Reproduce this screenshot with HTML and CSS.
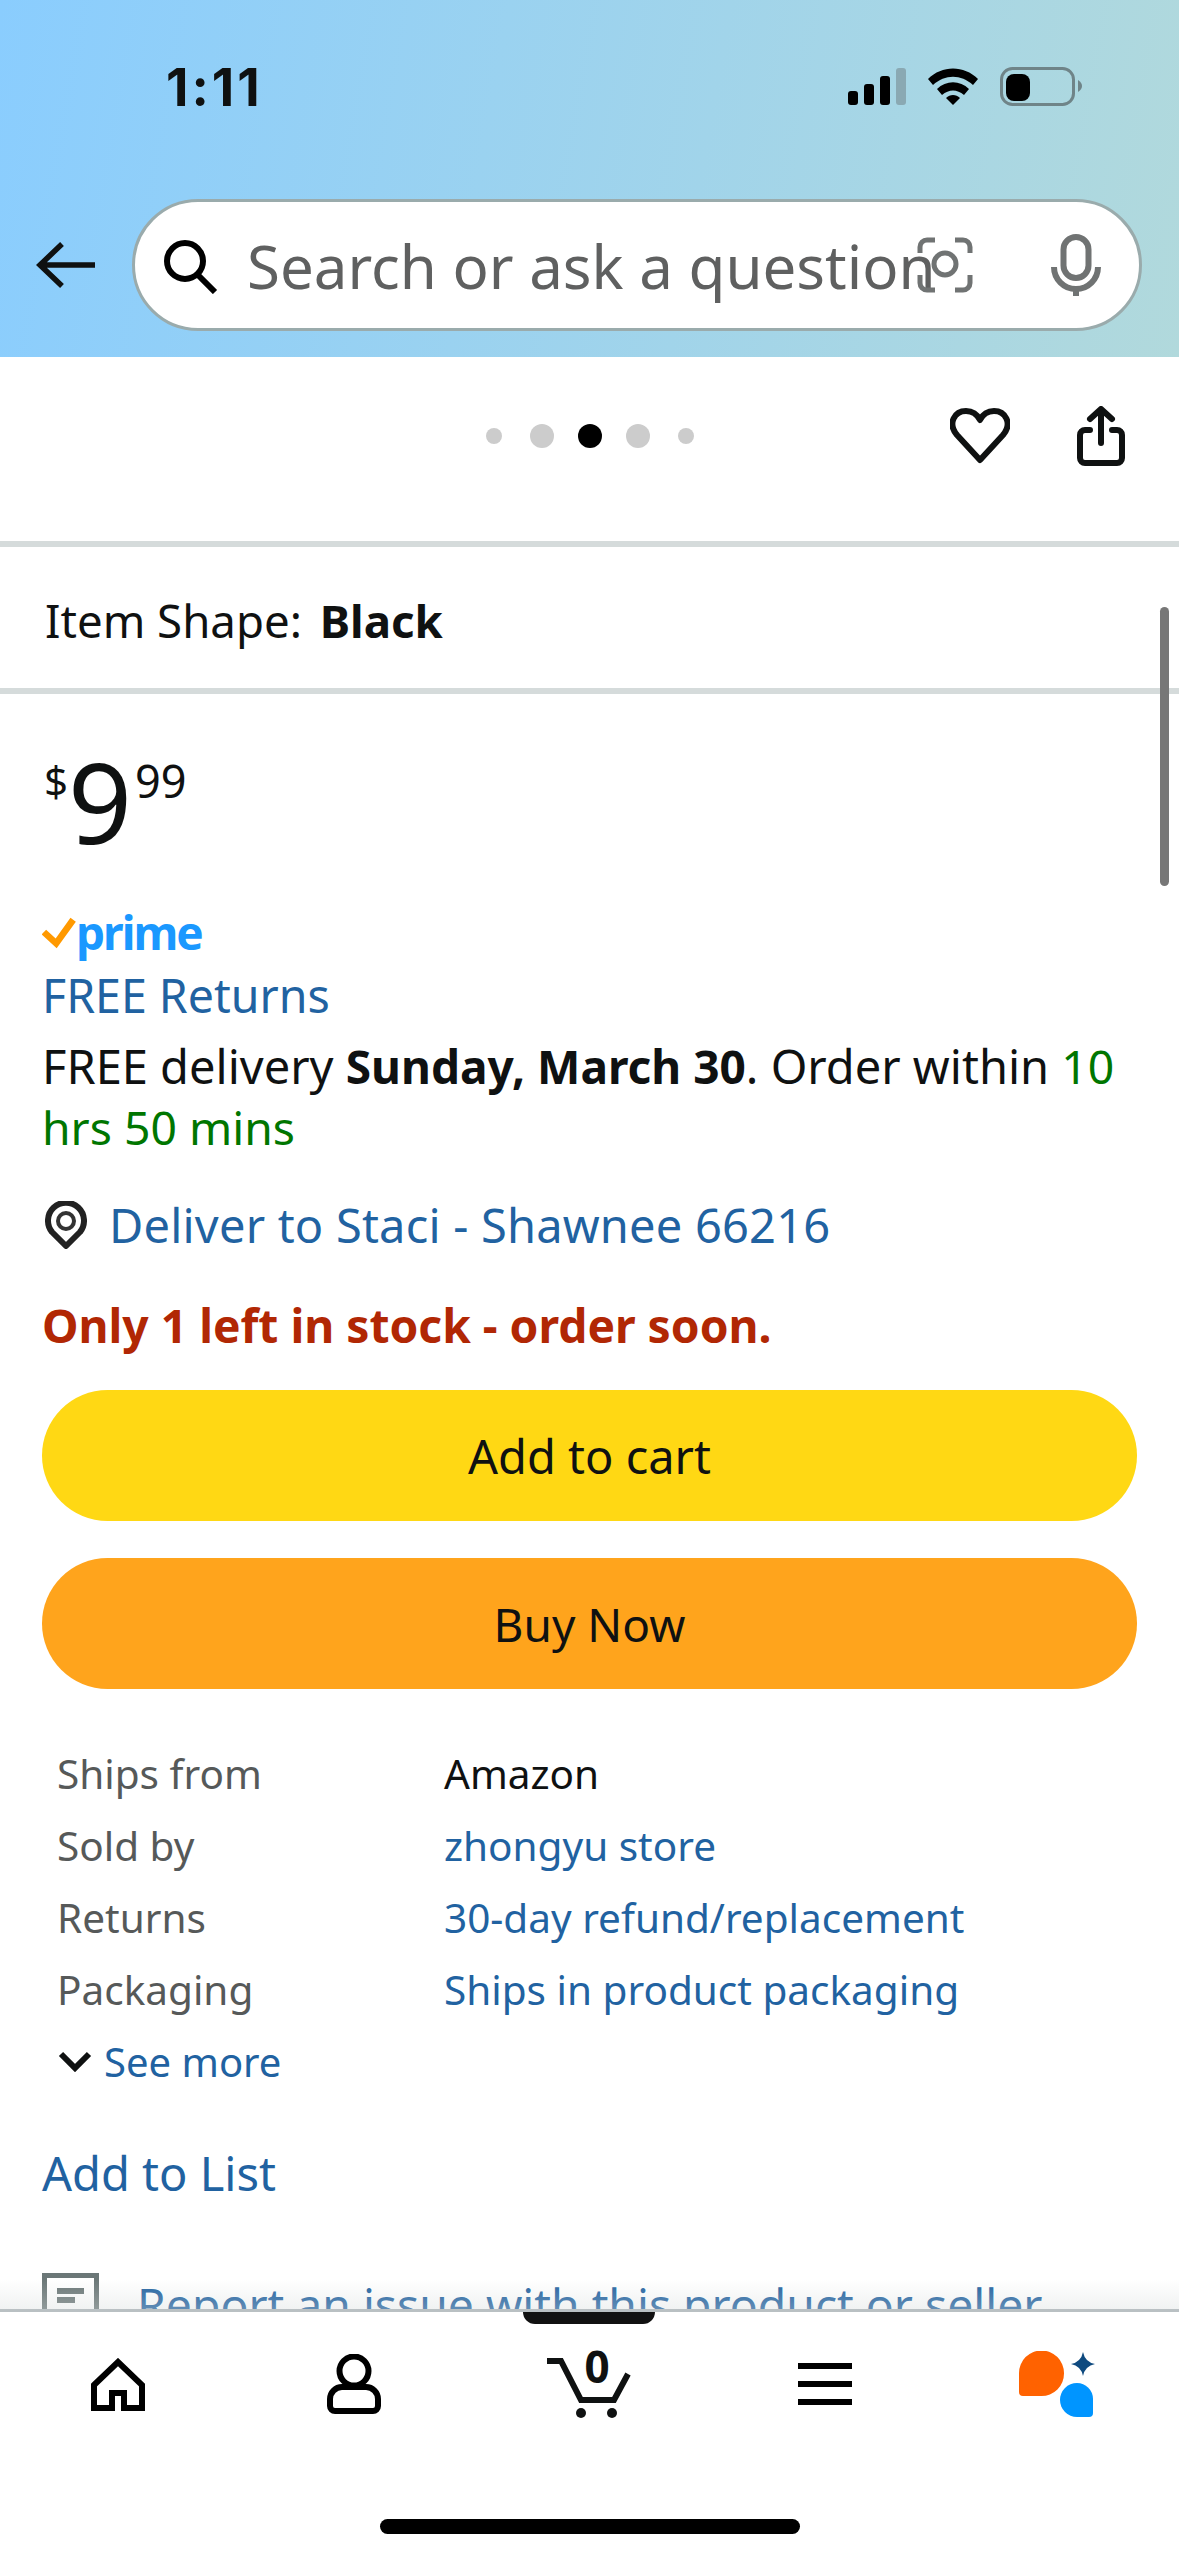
FILE: index.html
```html
<!DOCTYPE html>
<html lang="en">
<head>
  <meta charset="UTF-8">
  <meta name="viewport" content="width=device-width, initial-scale=1.0">
  <title>Product details</title>
  <link rel="stylesheet" href="styles.css">
</head>
<body>
  <header class="top">
    <div class="status">
      <span class="time">1:11</span>
      <div class="status-icons">
        <svg width="58" height="38" viewBox="0 0 58 38">
          <rect x="0" y="23" width="10" height="14" rx="3" fill="#000"/>
          <rect x="16" y="16" width="10" height="21" rx="3" fill="#000"/>
          <rect x="32" y="8" width="10" height="29" rx="3" fill="#000"/>
          <rect x="48" y="0" width="10" height="37" rx="3" fill="#8aa9b3"/>
        </svg>
        <svg width="50" height="38" viewBox="0 0 50 38">
          <path d="M0 11 C14 -3 36 -3 50 11 L45 17 C33 6 17 6 5 17 Z" fill="#000"/>
          <path d="M9 21 C18 12 32 12 41 21 L36 27 C29 21 21 21 14 27 Z" fill="#000"/>
          <path d="M18 30 C22 26 28 26 32 30 L25 37 Z" fill="#000"/>
        </svg>
        <svg width="82" height="40" viewBox="0 0 82 40">
          <rect x="1.5" y="1.5" width="72" height="36" rx="11" fill="none" stroke="#6f8488" stroke-width="3"/>
          <rect x="6" y="7" width="24" height="27" rx="8" fill="#000"/>
          <path d="M78 13 C81 15 82 17 82 19 C82 21 81 23 78 25 Z" fill="#6f8488"/>
        </svg>
      </div>
    </div>
    <div class="search-row">
      <svg class="back" width="59" height="48" viewBox="0 0 59 48">
        <path d="M59 24 H4 M26 3 L4 24 L26 45" fill="none" stroke="#0f1111" stroke-width="5.5"/>
      </svg>
      <div class="search">
        <svg class="search-icon" width="54" height="54" viewBox="0 0 54 54">
          <circle cx="21" cy="21" r="18" fill="none" stroke="#000" stroke-width="6"/>
          <path d="M33 34 L51 52" stroke="#000" stroke-width="6"/>
        </svg>
        <span class="search-text">Search or ask a question</span>
        <svg class="camera" width="56" height="56" viewBox="0 0 56 56">
          <path d="M3 16 V10 a7 7 0 0 1 7-7 H18 M38 3 H46 a7 7 0 0 1 7 7 V16 M53 38 V46 a7 7 0 0 1-7 7 H38 M18 53 H10 a7 7 0 0 1-7-7 V38" fill="none" stroke="#707373" stroke-width="5"/>
          <circle cx="28" cy="27" r="11" fill="none" stroke="#707373" stroke-width="5"/>
        </svg>
        <svg class="mic" width="50" height="62" viewBox="0 0 50 62">
          <rect x="12.5" y="3" width="25" height="41" rx="12.5" fill="none" stroke="#707373" stroke-width="6"/>
          <path d="M3 33 a22 22 0 0 0 44 0 M25 55 V62" fill="none" stroke="#707373" stroke-width="6"/>
        </svg>
      </div>
    </div>
  </header>

  <main class="page">
    <span class="scroll-thumb"></span>

    <div class="gallery-bar">
      <div></div>
      <div class="dots">
        <span class="dot small"></span>
        <span class="dot"></span>
        <span class="dot active"></span>
        <span class="dot"></span>
        <span class="dot small"></span>
      </div>
      <div class="gallery-actions">
        <svg width="60" height="56" viewBox="0 0 60 56">
          <path d="M30 52 L7 27 C-3 15 5 3 16 3 C22 3 27 6 30 12 C33 6 38 3 44 3 C55 3 63 15 53 27 Z" fill="none" stroke="#0f1111" stroke-width="6" stroke-linejoin="round"/>
        </svg>
        <svg width="48" height="60" viewBox="0 0 48 60">
          <path d="M13 24 H8 a5 5 0 0 0-5 5 V52 a5 5 0 0 0 5 5 H40 a5 5 0 0 0 5-5 V29 a5 5 0 0 0-5-5 H35" fill="none" stroke="#0f1111" stroke-width="6" stroke-linecap="round"/>
          <path d="M24 37 V4 M13 13 L24 3 L35 13" fill="none" stroke="#0f1111" stroke-width="6" stroke-linecap="round" stroke-linejoin="round"/>
        </svg>
      </div>
    </div>

    <div class="variant">Item Shape: <b>Black</b></div>

    <section class="buy-box">
      <div class="price">
        <span class="currency">$</span>
        <span class="whole">9</span>
        <span class="cents">99</span>
      </div>

      <div class="prime">
        <svg width="34" height="34" viewBox="0 0 36 34">
          <path d="M2 16 L15 28 L33 3" fill="none" stroke="#ff9900" stroke-width="7"/>
        </svg>
        <span class="prime-text">prime</span>
      </div>
      <a class="line link free-returns" href="#">FREE Returns</a>
      <p class="delivery">FREE delivery <b>Sunday, March 30</b>. Order within <span class="green">10 hrs 50 mins</span></p>

      <div class="deliver-to">
        <svg width="42" height="48" viewBox="0 0 42 48">
          <path d="M21 45 L7 31 A18 18 0 1 1 35 31 Z" fill="none" stroke="#222" stroke-width="6" stroke-linejoin="round"/>
          <circle cx="21" cy="20" r="8" fill="none" stroke="#333" stroke-width="4"/>
        </svg>
        <a class="link" href="#">Deliver to Staci - Shawnee 66216</a>
      </div>

      <p class="stock">Only 1 left in stock - order soon.</p>

      <button class="btn cart-btn">Add to cart</button>
      <button class="btn buy-btn">Buy Now</button>

      <div class="facts">
        <span class="fact-name">Ships from</span><span>Amazon</span>
        <span class="fact-name">Sold by</span><a class="link" href="#">zhongyu store</a>
        <span class="fact-name">Returns</span><a class="link" href="#">30-day refund/replacement</a>
        <span class="fact-name">Packaging</span><a class="link" href="#">Ships in product packaging</a>
      </div>
      <div class="see-more">
        <svg width="34" height="22" viewBox="0 0 34 22">
          <path d="M3 4 L17 18 L31 4" fill="none" stroke="#0f1111" stroke-width="6"/>
        </svg>
        <a class="link" href="#">See more</a>
      </div>

      <a class="line link add-list" href="#">Add to List</a>

      <div class="report">
        <svg width="57" height="60" viewBox="0 0 57 60">
          <rect x="2.5" y="2.5" width="52" height="55" fill="none" stroke="#6b7777" stroke-width="5"/>
          <rect x="15" y="15" width="27" height="6" fill="#6b7777"/>
          <rect x="15" y="24" width="18" height="6" fill="#6b7777"/>
        </svg>
        <a class="link" href="#">Report an issue with this product or seller</a>
      </div>
    </section>
  </main>

  <nav class="tabs">
    <span class="tab-fade"></span>
    <span class="tab-notch"></span>
    <div class="tab-row">
      <svg width="54" height="53" viewBox="0 0 54 53">
        <path d="M3 27 L27 4 L51 27 V50 H33 V35 H21 V50 H3 Z" fill="none" stroke="#000" stroke-width="6"/>
      </svg>
      <svg width="54" height="60" viewBox="0 0 54 60">
        <circle cx="27" cy="17" r="14.5" fill="none" stroke="#000" stroke-width="6"/>
        <path d="M3 52 V45 a12 12 0 0 1 12-12 H39 a12 12 0 0 1 12 12 V52 a5 5 0 0 1-5 5 H8 a5 5 0 0 1-5-5 Z" fill="none" stroke="#000" stroke-width="6"/>
      </svg>
      <div class="cart">
        <svg width="84" height="68" viewBox="0 0 84 68">
          <path d="M0 11 H14 L34 50 H67 L81 24" fill="none" stroke="#0f1111" stroke-width="6"/>
          <circle cx="34" cy="63" r="5" fill="#0f1111"/>
          <circle cx="65" cy="63" r="5" fill="#0f1111"/>
        </svg>
        <span class="cart-count">0</span>
      </div>
      <svg width="54" height="42" viewBox="0 0 54 42">
        <rect width="54" height="6" fill="#000"/>
        <rect y="18" width="54" height="6" fill="#000"/>
        <rect y="36" width="54" height="6" fill="#000"/>
      </svg>
      <svg class="rufus" width="76" height="66" viewBox="0 0 76 66">
        <path d="M0 22 A22.5 22.5 0 1 1 45 22 A22.5 22.5 0 0 1 22 45 H4 a4 4 0 0 1-4-4 Z" fill="#ff6200"/>
        <path d="M58 32 a16 16 0 0 1 16 16 V62 a4 4 0 0 1-4 4 H58 a17 17 0 0 1 0-34 Z" fill="#0095ff"/>
        <path d="M64 1 Q66 11 76 13 Q66 15 64 25 Q62 15 52 13 Q62 11 64 1 Z" fill="#0f4a7f"/>
      </svg>
    </div>
    <span class="home-bar"></span>
  </nav>
</body>
</html>
```

FILE: styles.css
```css
body {
  margin: 0;
  width: 1179px;
  height: 2556px;
  overflow: hidden;
  display: flex;
  flex-direction: column;
  font-family: 'Noto Sans', sans-serif;
  font-size: 47px;
  color: #0f1111;
  background: #fff;
}

a {
  text-decoration: none;
}

p {
  margin: 0;
}

/* Header */
.top {
  flex: none;
  height: 357px;
  background: linear-gradient(100deg, #8acdfe, #b1d9dc);
}

.status {
  height: 174px;
  display: flex;
  align-items: center;
  justify-content: space-between;
  padding: 0 97px 0 166px;
  box-sizing: border-box;
}

.time {
  font-family: Inter, sans-serif;
  font-weight: 700;
  font-size: 52px;
  letter-spacing: 3px;
}

.status-icons {
  display: flex;
  align-items: center;
  gap: 22px;
}

.search-row {
  margin-top: 25px;
  padding-left: 36px;
  display: flex;
  align-items: center;
  gap: 37px;
}

.search {
  width: 1010px;
  height: 132px;
  box-sizing: border-box;
  border: 3px solid #9aabac;
  border-radius: 66px;
  background: #fff;
  display: flex;
  align-items: center;
  padding-left: 29px;
}

.search-icon {
  flex: none;
  margin-right: 29px;
  margin-top: 3px;
}

.search-text {
  flex: none;
  width: 670px;
  margin-top: 2px;
  white-space: nowrap;
  font-size: 60px;
  color: #5f6060;
}

.camera {
  flex: none;
}

.mic {
  flex: none;
  margin-left: 78px;
}

/* Page body */
.page {
  flex: 1;
  min-height: 0;
  overflow: hidden;
  position: relative;
}

.scroll-thumb {
  position: absolute;
  right: 10px;
  top: 250px;
  width: 9px;
  height: 279px;
  border-radius: 5px;
  background: #777;
}

.gallery-bar {
  height: 190px;
  box-sizing: border-box;
  padding-bottom: 26px;
  display: grid;
  grid-template-columns: 1fr auto 1fr;
  align-items: center;
  border-bottom: 6px solid #d5dbdb;
}

.dots {
  display: flex;
  align-items: center;
  gap: 24px;
}

.dot {
  width: 24px;
  height: 24px;
  border-radius: 50%;
  background: #ccc;
}

.dot.small {
  width: 16px;
  height: 16px;
  margin: 0 4px;
}

.dot.active {
  background: #000;
}

.gallery-actions {
  display: flex;
  align-items: center;
  justify-content: flex-end;
  gap: 67px;
  padding-right: 54px;
}

.variant {
  height: 147px;
  box-sizing: border-box;
  padding-left: 45px;
  font-size: 45.6px;
  line-height: 147px;
  border-bottom: 6px solid #d5dbdb;
}

.variant b {
  margin-left: 6px;
}

.buy-box {
  padding: 0 42px;
}

.price {
  height: 208px;
  display: flex;
  align-items: flex-start;
  padding-top: 52px;
  box-sizing: border-box;
  padding-left: 2px;
}

.currency {
  font-size: 42px;
  line-height: 50px;
  margin-top: 10px;
}

.whole {
  font-size: 112px;
  line-height: 130px;
  margin-top: -10px;
}

.cents {
  font-size: 45px;
  line-height: 50px;
  margin-top: 10px;
  margin-left: 3px;
}

.prime {
  height: 61px;
  display: flex;
  align-items: center;
}

.prime-text {
  font-weight: 700;
  font-size: 46px;
  letter-spacing: -2px;
  color: #1a98ff;
  line-height: 61px;
}

.line {
  display: block;
  line-height: 61px;
}

.link {
  color: #2162a1;
}

.free-returns {
  margin-top: 2px;
  font-size: 46.5px;
}

.delivery {
  margin-top: 10px;
  line-height: 61px;
}

.delivery b {
  font-size: 46px;
}

.green {
  color: #007600;
  font-size: 46.3px;
}

.deliver-to {
  margin-top: 36px;
  height: 62px;
  display: flex;
  align-items: center;
  gap: 22px;
  padding-left: 3px;
  letter-spacing: 0.2px;
}

.stock {
  margin-top: 39px;
  font-size: 46.2px;
  font-weight: 700;
  color: #b12704;
  line-height: 62px;
}

.btn {
  display: block;
  width: 1095px;
  height: 131px;
  border: none;
  border-radius: 66px;
  font-family: inherit;
  font-size: 47px;
  color: #0f1111;
}

.cart-btn {
  margin-top: 33px;
  background: #ffd814;
}

.buy-btn {
  margin-top: 37px;
  font-size: 46px;
  background: #ffa41c;
}

.facts {
  margin-top: 48px;
  padding-left: 15px;
  display: grid;
  grid-template-columns: 387px 1fr;
  grid-auto-rows: 72px;
  align-items: center;
  font-size: 40.5px;
}

.fact-name {
  color: #565959;
}

.see-more {
  height: 72px;
  padding-left: 16px;
  display: flex;
  align-items: center;
  gap: 12px;
  font-size: 40px;
}

.add-list {
  margin-top: 46px;
}

.report {
  margin-top: 69px;
  display: flex;
  align-items: flex-start;
  gap: 38px;
  font-size: 46.3px;
}

/* Bottom tabs */
.tabs {
  flex: none;
  height: 247px;
  box-sizing: border-box;
  border-top: 3px solid #b9c0c3;
  background: #fff;
  position: relative;
  display: flex;
  flex-direction: column;
  align-items: center;
}

.tab-fade {
  position: absolute;
  left: 0;
  right: 0;
  top: -33px;
  height: 30px;
  background: linear-gradient(rgba(213, 219, 219, 0), rgba(213, 219, 219, 0.35));
}

.tab-notch {
  position: absolute;
  left: 523px;
  top: 0;
  width: 132px;
  height: 12px;
  border-radius: 0 0 12px 12px;
  background: #111;
}

.tab-row {
  width: 100%;
  height: 72px;
  margin-top: 36px;
  display: grid;
  grid-template-columns: repeat(5, 1fr);
  justify-items: center;
  align-items: center;
}

.cart {
  position: relative;
  height: 68px;
}

.cart svg {
  display: block;
}

.cart-count {
  position: absolute;
  left: 37px;
  top: -6px;
  font-weight: 700;
  font-size: 44px;
  line-height: 44px;
  color: #0f1111;
}

.rufus {
  margin-left: -8px;
}

.home-bar {
  margin-top: 99px;
  width: 420px;
  height: 15px;
  flex: none;
  border-radius: 8px;
  background: #000;
}
```
